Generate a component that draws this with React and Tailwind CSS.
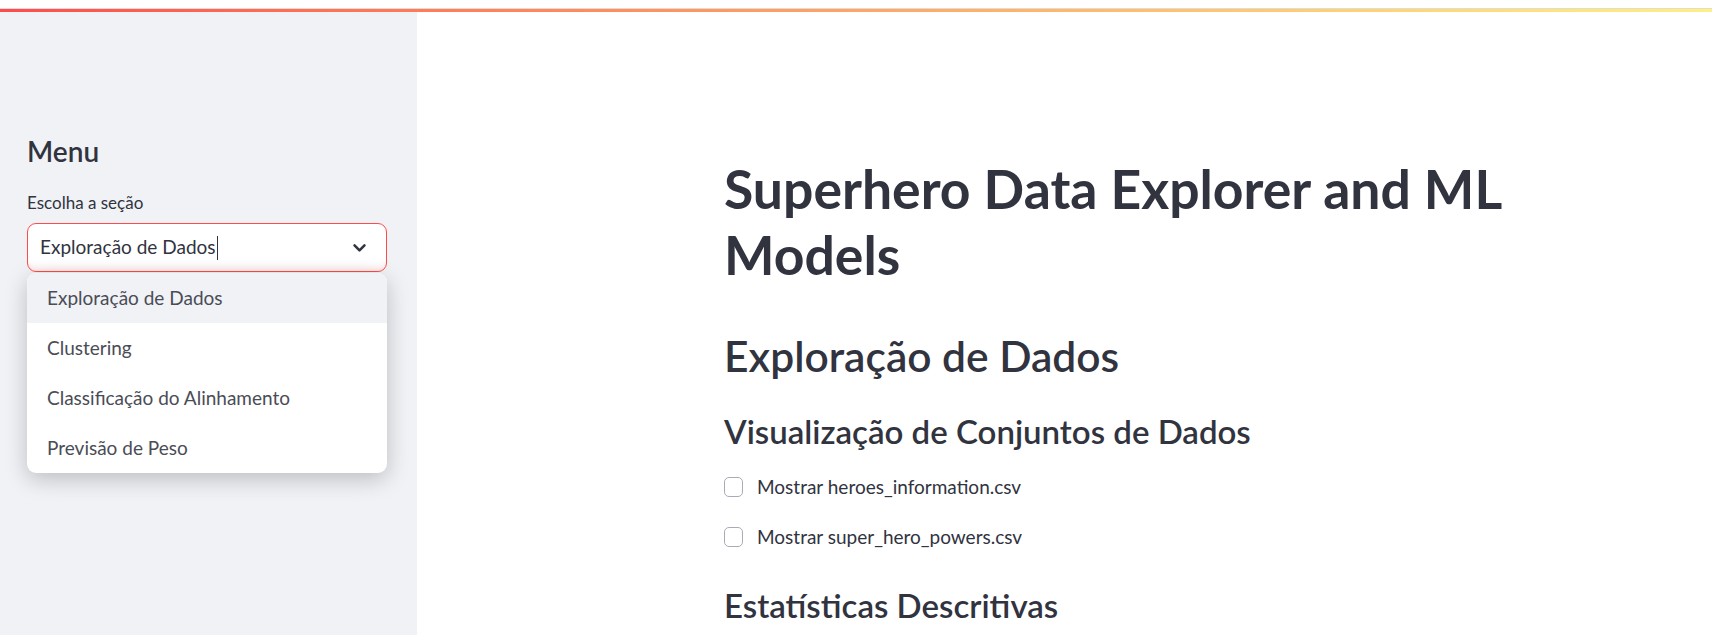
import React from 'react';

function Chevron() {
  return (
    <svg width="17" height="17" viewBox="0 0 24 24" fill="none" stroke="#31333f" strokeWidth="3.6" strokeLinecap="round" strokeLinejoin="round">
      <path d="M5 9l7 7 7-7" />
    </svg>
  );
}

function Checkbox({ label }) {
  return (
    <label className="flex items-center h-[30px] gap-[14px]">
      <span className="w-[19px] h-[20px] rounded-[5px] border border-[#a9acb8] bg-white" />
      <span className="text-[19px] text-[#31333f]">{label}</span>
    </label>
  );
}

export default function App() {
  const options = ['Exploração de Dados', 'Clustering', 'Classificação do Alinhamento', 'Previsão de Peso'];

  return (
    <div className="min-h-screen bg-white text-[#31333f] font-['Lato','Noto_Sans',sans-serif]">
      {/* top decoration */}
      <div className="h-[8px] bg-white" />
      <div className="h-[1px] bg-[#dcdcdc]" />
      <div className="h-[3px] bg-gradient-to-r from-[#ff4b4b] to-[#fff080]" />

      <div className="flex h-[623px]">
        {/* Sidebar */}
        <aside className="w-[417px] shrink-0 bg-[#f0f2f6] pl-[27px] pr-[30px] pt-[121px]">
          <h2 className="text-[28px] leading-[36px] font-semibold">Menu</h2>
          <p className="mt-[23px] text-[17px] leading-[22px]">Escolha a seção</p>
          <div className="relative mt-[9px] w-[360px]">
            <div className="flex items-center justify-between h-[49px] rounded-[9px] border border-[#ff4b4b] bg-white pl-[12px] pr-[18px] shadow-[inset_0_-6px_8px_-6px_rgba(255,75,75,0.25)]">
              <span className="flex items-center text-[19px]">
                Exploração de Dados
                <span className="ml-[1px] inline-block w-[1px] h-[24px] bg-[#31333f]" />
              </span>
              <Chevron />
            </div>
            <ul className="absolute left-0 top-full mt-[1px] w-[360px] rounded-[9px] bg-white overflow-hidden shadow-[0_6px_22px_rgba(0,0,0,0.22)] z-10">
              {options.map((o, i) => (
                <li
                  key={o}
                  className={`h-[50px] flex items-center pl-[20px] text-[19px] text-[#4a4c56] ${i === 0 ? 'bg-[#f0f2f6]' : ''}`}
                >
                  {o}
                </li>
              ))}
            </ul>
          </div>
        </aside>

        {/* Main */}
        <main className="flex-1 pl-[307px] pt-[143px]">
          <h1 className="text-[53.5px] leading-[66px] font-bold max-w-[820px]">
            Superhero Data Explorer and ML Models
          </h1>
          <h2 className="mt-[42px] text-[42.5px] leading-[54px] font-semibold">Exploração de Dados</h2>
          <h3 className="mt-[27px] text-[33px] leading-[42px] font-semibold">Visualização de Conjuntos de Dados</h3>
          <div className="mt-[20px] flex flex-col gap-[20px]">
            <Checkbox label="Mostrar heroes_information.csv" />
            <Checkbox label="Mostrar super_hero_powers.csv" />
          </div>
          <h3 className="mt-[32px] text-[33px] leading-[42px] font-semibold">Estatísticas Descritivas</h3>
        </main>
      </div>
    </div>
  );
}
